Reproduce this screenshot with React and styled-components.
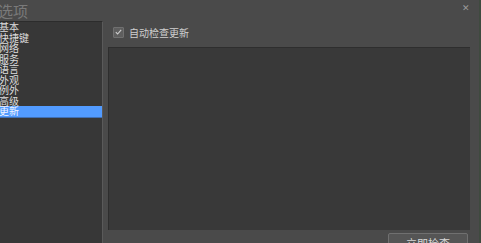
import React from 'react';
import styled, { createGlobalStyle } from 'styled-components';

const Global = createGlobalStyle`
  html, body {
    margin: 0;
    padding: 0;
    background: #4a4a4a;
    overflow: hidden;
  }
  body {
    font-family: "Noto Sans CJK SC", "Noto Sans", sans-serif;
  }
`;

const Window = styled.div`
  width: 481px;
  height: 243px;
  background: #4a4a4a;
  display: flex;
  flex-direction: column;
  overflow: hidden;
  border-right: 2px solid #3f4a3f;
  box-sizing: border-box;
`;

const TitleBar = styled.div`
  height: 21px;
  display: flex;
  align-items: center;
  justify-content: space-between;
  flex-shrink: 0;
`;

const Title = styled.div`
  margin-left: -2px;
  font-size: 15px;
  line-height: 21px;
  color: #7a7a7a;
`;

const Close = styled.div`
  margin-right: 9px;
  margin-top: -7px;
  font-size: 9px;
  color: #9a9a9a;
  line-height: 1;
`;

const Body = styled.div`
  flex: 1;
  display: flex;
  min-height: 0;
`;

const Sidebar = styled.ul`
  width: 102px;
  margin: 0;
  padding: 0;
  list-style: none;
  background: #373737;
  border-top: 1px solid #2c2c2c;
  border-right: 1px solid #5a5a5a;
  flex-shrink: 0;
`;

const Item = styled.li`
  height: 10.5px;
  line-height: 10.5px;
  font-size: 10px;
  margin-left: -1px;
  color: ${p => (p.active ? '#f0f4ff' : '#dcdcdc')};
  background: ${p => (p.active ? '#529bff' : 'transparent')};
  border-bottom: ${p => (p.active ? '1px solid #3f6fb5' : 'none')};
  white-space: nowrap;
`;

const Content = styled.div`
  flex: 1;
  display: flex;
  flex-direction: column;
  padding: 5px 9px 0 5px;
  overflow: hidden;
`;

const CheckRow = styled.label`
  display: flex;
  align-items: center;
  gap: 5px;
  margin-left: 5px;
  height: 12px;
  font-size: 10px;
  color: #cfcfcf;
  flex-shrink: 0;
`;

const Box = styled.span`
  width: 9px;
  height: 9px;
  border: 1px solid #707070;
  background: #5e5e5e;
  border-radius: 1px;
  display: flex;
  align-items: center;
  justify-content: center;
`;

const Panel = styled.div`
  margin-top: 9px;
  height: 183px;
  flex-shrink: 0;
  background: #393939;
  border-top: 1px solid #2e2e2e;
  border-left: 1px solid #2e2e2e;
  box-sizing: border-box;
`;

const Footer = styled.div`
  display: flex;
  justify-content: flex-end;
  margin-top: 3px;
  padding-right: 2px;
  flex-shrink: 0;
`;

const Button = styled.div`
  width: 80px;
  height: 20px;
  box-sizing: border-box;
  border: 1px solid #707070;
  border-radius: 2px;
  background: #555555;
  color: #d8d8d8;
  font-size: 11px;
  text-align: center;
  line-height: 18px;
`;

const items = ['基本', '快捷键', '网络', '服务', '语言', '外观', '例外', '高级', '更新'];

export default function App() {
  return (
    <>
      <Global />
      <Window>
        <TitleBar>
          <Title>选项</Title>
          <Close>✕</Close>
        </TitleBar>
        <Body>
          <Sidebar>
            {items.map(name => (
              <Item key={name} active={name === '更新'}>{name}</Item>
            ))}
          </Sidebar>
          <Content>
            <CheckRow>
              <Box>
                <svg width="7" height="6" viewBox="0 0 7 6">
                  <path d="M0.8 3.2 L2.6 5 L6.2 0.9" fill="none" stroke="#d0d0d0" strokeWidth="1.1" />
                </svg>
              </Box>
              自动检查更新
            </CheckRow>
            <Panel />
            <Footer>
              <Button>立即检查</Button>
            </Footer>
          </Content>
        </Body>
      </Window>
    </>
  );
}
